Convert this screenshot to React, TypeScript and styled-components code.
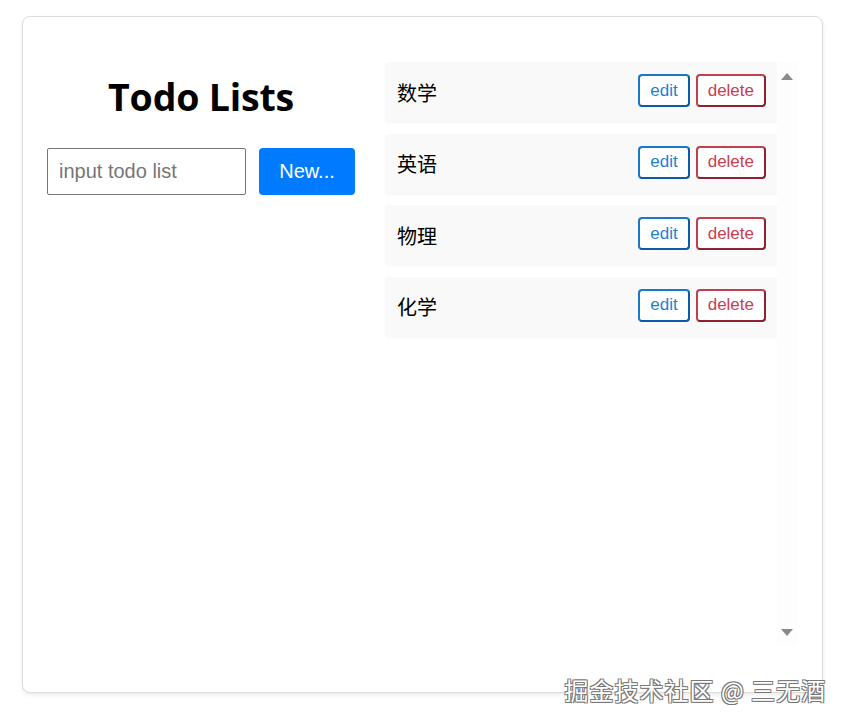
import React from "react";
import styled, { createGlobalStyle } from "styled-components";

const Global = createGlobalStyle`
  html, body { margin: 0; padding: 0; background: #ffffff; }
  body { font-family: "Liberation Sans", Arial, sans-serif; }
  * { box-sizing: border-box; }
`;

const Page = styled.div`
  position: relative;
  width: 846px;
  height: 724px;
  padding: 16px 0 0 22px;
`;

const Card = styled.div`
  width: 801px;
  height: 677px;
  border: 1px solid #dcdcdc;
  border-radius: 8px;
  background: #fff;
  box-shadow: 0 2px 4px rgba(0, 0, 0, 0.08);
  display: flex;
  padding: 45px 21px 46px 24px;
  gap: 30px;
`;

const LeftCol = styled.div`
  width: 308px;
  display: flex;
  flex-direction: column;
  align-items: center;
`;

const Title = styled.h1`
  margin: 15px 0 0;
  font-family: "Open Sans", "Noto Sans", sans-serif;
  font-weight: 700;
  font-size: 37.5px;
  line-height: 40px;
  color: #000;
  letter-spacing: -0.2px;
`;

const Form = styled.div`
  margin-top: 31px;
  display: flex;
  gap: 13px;
  width: 100%;
`;

const Input = styled.input`
  width: 199px;
  height: 47px;
  border: 1px solid #767676;
  border-radius: 2px;
  padding: 0 11px;
  font-family: "Liberation Sans", Arial, sans-serif;
  font-size: 20px;
  color: #222;
  outline: none;
  &::placeholder { color: #767676; }
`;

const NewButton = styled.button`
  width: 96px;
  height: 47px;
  border: none;
  border-radius: 4px;
  background: #007bff;
  color: #fff;
  font-family: "Liberation Sans", Arial, sans-serif;
  font-size: 20px;
  padding: 0;
`;

const ListArea = styled.div`
  display: flex;
  height: 583px;
`;

const List = styled.div`
  width: 393px;
  display: flex;
  flex-direction: column;
  gap: 11.67px;
`;

const Item = styled.div`
  height: 60px;
  background: #f9f9f9;
  border-radius: 3px;
  box-shadow: 0 1px 2px rgba(0, 0, 0, 0.04);
  display: flex;
  align-items: center;
  padding: 0 12px;
`;

const ItemName = styled.span`
  flex: 1;
  font-family: "Noto Sans CJK SC", sans-serif;
  font-size: 20px;
  color: #000;
`;

const Actions = styled.div`
  display: flex;
  gap: 6px;
  margin-top: -3px;
`;

const ActionButton = styled.button<{ $variant: "edit" | "delete" }>`
  height: 33px;
  padding: 0 10px;
  background: #fff;
  border: 2px solid;
  border-radius: 4px;
  font-family: "Liberation Sans", Arial, sans-serif;
  font-size: 17px;
  color: ${(p) => (p.$variant === "edit" ? "#1d7fd3" : "#c8404f")};
  border-color: ${(p) =>
    p.$variant === "edit"
      ? "#1a78c8 #0b5aa8 #0b5aa8 #1a78c8"
      : "#c0404c #8e2030 #8e2030 #c0404c"};
`;

const Track = styled.div`
  width: 20px;
  margin-left: -1px;
  background: #fdfdfd;
  display: flex;
  flex-direction: column;
  justify-content: space-between;
  align-items: center;
  padding: 11px 0 9px;
`;

const Arrow = styled.div<{ $down?: boolean }>`
  width: 0;
  height: 0;
  border-left: 6px solid transparent;
  border-right: 6px solid transparent;
  ${(p) =>
    p.$down
      ? "border-top: 7px solid #8a8a8a;"
      : "border-bottom: 7px solid #8a8a8a;"}
`;

const Watermark = styled.div`
  position: absolute;
  right: 20px;
  bottom: 20px;
  font-family: "Noto Sans CJK SC", sans-serif;
  font-size: 24px;
  line-height: 28px;
  color: #fff;
  letter-spacing: 1px;
  text-shadow: -1px -1px 0 #777, 1px -1px 0 #777, -1px 1px 0 #777, 1px 1px 0 #777;
`;

const todos = ["数学", "英语", "物理", "化学"];

export default function App() {
  return (
    <Page>
      <Global />
      <Card>
        <LeftCol>
          <Title>Todo Lists</Title>
          <Form>
            <Input placeholder="input todo list" />
            <NewButton>New...</NewButton>
          </Form>
        </LeftCol>
        <ListArea>
          <List>
            {todos.map((t) => (
              <Item key={t}>
                <ItemName>{t}</ItemName>
                <Actions>
                  <ActionButton $variant="edit">edit</ActionButton>
                  <ActionButton $variant="delete">delete</ActionButton>
                </Actions>
              </Item>
            ))}
          </List>
          <Track>
            <Arrow />
            <Arrow $down />
          </Track>
        </ListArea>
      </Card>
      <Watermark>掘金技术社区 @ 三无酒</Watermark>
    </Page>
  );
}
